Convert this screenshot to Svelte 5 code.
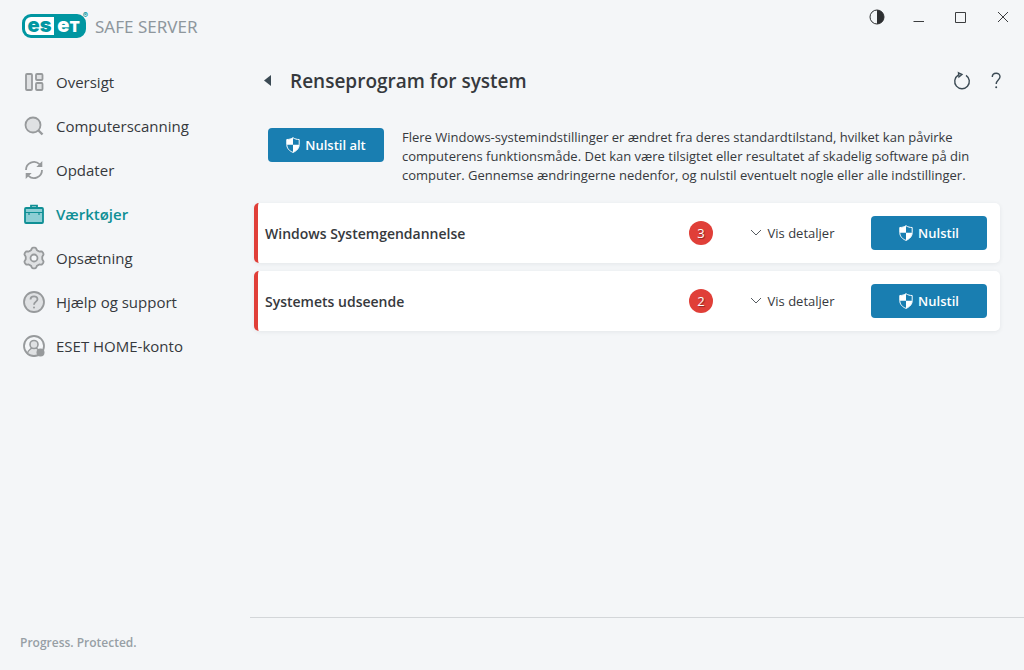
<script>
	const nav = [
		{ id: 'overview', label: 'Oversigt' },
		{ id: 'scan', label: 'Computerscanning' },
		{ id: 'update', label: 'Opdater' },
		{ id: 'tools', label: 'Værktøjer' },
		{ id: 'setup', label: 'Opsætning' },
		{ id: 'help', label: 'Hjælp og support' },
		{ id: 'account', label: 'ESET HOME-konto' },
	];

	const items = [
		{ name: 'Windows Systemgendannelse', count: 3 },
		{ name: 'Systemets udseende', count: 2 },
	];

	// six rounded teeth, the first one pointing up
	const gear = Array.from({ length: 72 }, (_, i) => {
		const a = (i * Math.PI) / 36;
		const r = 9.3 + 1.1 * Math.tanh(2 * Math.cos(6 * a));
		return `${(12 + r * Math.sin(a)).toFixed(2)},${(12 - r * Math.cos(a)).toFixed(2)}`;
	}).join(' ');

	let active = $state('tools');
</script>

{#snippet shield()}
	<svg width="14" height="16" viewBox="0 0 14 16" aria-hidden="true">
		<path d="M7 .7C5.200 2 3 2.500 .8 2.500V7.500C.8 11.400 3.300 13.900 7 15.400C10.700 13.900 13.200 11.400 13.200 7.500V2.500C11 2.500 8.800 2 7 .7Z" fill="none" stroke="#fff" />
		<path d="M7 .7C5.200 2 3 2.500 .8 2.500V7.800H7ZM7 7.800H13.200C13 11.500 10.700 13.900 7 15.400Z" fill="#fff" />
	</svg>
{/snippet}

<div class="app">
	<aside class="sidebar">
		<div class="brand">
			<div class="logo"><span class="logo__left">es</span><span class="logo__right">e<small>T</small></span><sup>®</sup></div>
			<span class="brand__name">SAFE SERVER</span>
		</div>

		<nav>
			{#each nav as item}
				<a href="#{item.id}" class:active={active === item.id} onclick={() => (active = item.id)}>
					<svg width="24" height="24" viewBox="0 0 24 24" aria-hidden="true">
						{#if item.id === 'overview'}
							<rect x="4" y="4" width="6" height="16" rx="1" />
							<rect x="14" y="4" width="6.500" height="6" rx="1" />
							<rect x="14" y="13" width="6.500" height="7" rx="1" />
						{:else if item.id === 'scan'}
							<circle cx="11" cy="11" r="7.500" />
							<path d="M16.500 16.500L20.500 20.500" stroke-width="2.400" />
						{:else if item.id === 'update'}
							<path class="line" d="M4 12A8 8 0 0 1 17.500 6.200M20 12A8 8 0 0 1 6.500 17.800" />
							<path class="solid" d="M20.300 3V9H14.300ZM3.700 21V15H9.700Z" />
						{:else if item.id === 'tools'}
							<path class="line" d="M9 6V3.700H15V6" />
							<rect x="3" y="6" width="18" height="15" rx="1" />
							<path d="M3 10.500H21M7 10.500V13M17 10.500V13" stroke-width="1.200" />
						{:else if item.id === 'setup'}
							<polygon points={gear} />
							<circle cx="12" cy="12" r="3.500" class="hole" />
						{:else if item.id === 'help'}
							<circle cx="12" cy="12" r="10" />
							<path class="line" d="M8.500 9.500C8.500 5.300 15.500 5.300 15.500 9.300C15.500 11.800 12 11.500 12 14.800" />
							<circle class="dot" cx="12" cy="17.500" r="1" />
						{:else}
							<circle cx="12" cy="12" r="10" class="hole" />
							<path d="M5.500 19.500C5.500 16.500 8.500 15.500 9.700 14H14.300C15.500 15.500 18.500 16.500 18.500 19.500Q12 24 5.500 19.500Z" stroke-width="1.400" />
							<circle cx="12" cy="10.500" r="4" stroke-width="1.600" />
							<circle class="dot" cx="18.500" cy="18.500" r="4" />
						{/if}
					</svg>
					{item.label}
				</a>
			{/each}
		</nav>

		<p class="slogan">Progress. Protected.</p>
	</aside>

	<main>
		<div class="window">
			<button aria-label="Skift tema">
				<svg width="16" height="16" viewBox="0 0 16 16">
					<circle cx="8" cy="8" r="7" fill="none" stroke="#2d2f31" />
					<path d="M8 1A7 7 0 0 1 8 15Z" />
				</svg>
			</button>
			<button aria-label="Minimer">
				<svg width="16" height="16" viewBox="0 0 16 16"><path d="M2.500 12.500H13" /></svg>
			</button>
			<button aria-label="Maksimer">
				<svg width="16" height="16" viewBox="0 0 16 16"><path d="M2.500 3.500H12.500V13.500H2.500Z" /></svg>
			</button>
			<button aria-label="Luk">
				<svg width="16" height="16" viewBox="0 0 16 16"><path d="M3 3L13 13M13 3L3 13" /></svg>
			</button>
		</div>

		<header>
			<button class="back" aria-label="Tilbage">
				<svg width="8" height="12" viewBox="0 0 8 12"><path d="M7 0V11L0 5.500Z" fill="#3b4a54" /></svg>
			</button>
			<h1>Renseprogram for system</h1>
			<button class="tool" aria-label="Opdater">
				<svg width="20" height="20" viewBox="0 0 20 20">
					<path d="M6.200 4.200A7.300 7.300 0 1 0 14 4.300" />
					<path d="M6.500 1.800L10 3.500L7 6Z" />
				</svg>
			</button>
			<button class="tool" aria-label="Hjælp">
				<svg width="20" height="20" viewBox="0 0 20 20">
					<path d="M6.300 6C6.300 1 14 1 14 5.700C14 9 10.200 9 10.200 13" />
					<circle cx="10.200" cy="16.300" r="1" fill="#3b4a54" />
				</svg>
			</button>
		</header>

		<section class="intro">
			<button class="primary">{@render shield()}Nulstil alt</button>
			<p>
				Flere Windows-systemindstillinger er ændret fra deres standardtilstand, hvilket kan påvirke
				computerens funktionsmåde. Det kan være tilsigtet eller resultatet af skadelig software på din
				computer. Gennemse ændringerne nedenfor, og nulstil eventuelt nogle eller alle indstillinger.
			</p>
		</section>

		<ul>
			{#each items as item}
				<li>
					<h2>{item.name}</h2>
					<span class="count">{item.count}</span>
					<button class="details">
						<svg width="12" height="8" viewBox="0 0 12 8" aria-hidden="true"><path d="M1 1L6 6L11 1" fill="none" stroke="#555b60" /></svg>
						Vis detaljer
					</button>
					<button class="primary">{@render shield()}Nulstil</button>
				</li>
			{/each}
		</ul>

		<footer></footer>
	</main>
</div>

<style>
	:global(body) {
		margin: 0;
		background: #f4f6f8;
		color: #36393d;
		font-family: 'Open Sans', 'Noto Sans', sans-serif;
		font-size: 13px;
	}

	.app {
		display: grid;
		grid-template-columns: 250px 1fr;
		min-height: 100vh;
	}

	h1,
	h2,
	p,
	ul {
		margin: 0;
		padding: 0;
	}

	button {
		display: flex;
		align-items: center;
		justify-content: center;
		padding: 0;
		border: 0;
		background: none;
		color: inherit;
		font: inherit;
		cursor: pointer;
	}

	.sidebar {
		display: flex;
		flex-direction: column;
	}

	.brand {
		display: flex;
		align-items: center;
		gap: 9px;
		height: 52px;
		padding: 0 0 8px 22px;
	}

	.logo {
		position: relative;
		display: flex;
		box-sizing: border-box;
		width: 64px;
		height: 24px;
		border: 3px solid #0096a1;
		border-radius: 9px;
		background: #0096a1;
		color: #fff;
		font-family: Inter, sans-serif;
		font-size: 20px;
		font-weight: 900;
		line-height: 16px;
	}

	.logo span {
		flex: 1;
		text-align: center;
	}

	.logo small {
		font-size: 15px;
	}

	.logo__left {
		border-radius: 6px 0 0 6px;
		background: #fff;
		color: #0096a1;
	}

	.logo sup {
		position: absolute;
		top: -8px;
		right: -5px;
		color: #0096a1;
		font-size: 8px;
		line-height: 12px;
	}

	.brand__name {
		color: #8e979d;
		font-family: 'Noto Sans', sans-serif;
		font-size: 17px;
	}

	nav a {
		display: flex;
		align-items: center;
		gap: 10px;
		height: 44px;
		padding-left: 22px;
		color: #36393d;
		font-size: 15px;
		text-decoration: none;
	}

	nav .active {
		color: #0f8f95;
		font-weight: 600;
	}

	nav svg {
		fill: #dfe1e3;
		stroke: #979a9c;
		stroke-width: 1.8;
	}

	nav .active svg {
		fill: #8dced4;
		stroke: #0f8f95;
	}

	nav .line {
		fill: none;
	}

	nav .hole {
		fill: #f4f6f8;
	}

	nav .solid,
	nav .dot {
		fill: #979a9c;
		stroke: none;
	}

	.slogan {
		margin-top: auto;
		padding: 0 0 18px 20px;
		color: #979fa5;
		font-size: 12px;
		font-weight: 600;
		line-height: 18px;
	}

	main {
		display: flex;
		flex-direction: column;
	}

	.window {
		display: flex;
		justify-content: flex-end;
		height: 34px;
	}

	.window button {
		width: 42px;
	}

	.window path {
		fill: none;
		stroke: #3b3d3f;
	}

	.window button:first-child path {
		fill: #2d2f31;
		stroke: none;
	}

	header {
		display: flex;
		align-items: center;
		height: 42px;
		padding: 26px 18px 0 8px;
	}

	.back {
		width: 20px;
		height: 20px;
	}

	h1 {
		flex: 1;
		padding-left: 12px;
		font-size: 19px;
		font-weight: 600;
		line-height: 28px;
	}

	.tool {
		width: 20px;
		height: 20px;
		margin-left: 14px;
	}

	.tool path {
		fill: none;
		stroke: #3b4a54;
		stroke-width: 1.4;
	}

	.intro {
		display: flex;
		gap: 18px;
		align-items: flex-start;
		padding: 26px 24px 18px 18px;
	}

	.intro p {
		flex: 1;
		line-height: 19px;
	}

	.primary {
		flex: none;
		gap: 5px;
		width: 116px;
		height: 34px;
		border-radius: 4px;
		background: #197eb1;
		color: #fff;
		font-weight: 600;
	}

	ul {
		display: grid;
		gap: 8px;
		padding: 0 24px 0 4px;
		list-style: none;
	}

	li {
		display: flex;
		align-items: center;
		box-sizing: border-box;
		height: 60px;
		padding: 0 13px 0 7px;
		border-left: 4px solid #e03f38;
		border-radius: 5px;
		background: #fff;
		box-shadow: 0 1px 4px rgba(40, 50, 70, 0.08);
	}

	h2 {
		flex: 1;
		font-size: 14px;
		font-weight: 600;
	}

	.count {
		width: 24px;
		border-radius: 12px;
		background: #e03f38;
		color: #fff;
		line-height: 24px;
		text-align: center;
		text-shadow: 1px 1px 1px rgba(0, 0, 0, 0.4);
	}

	.details {
		gap: 6px;
		width: 86px;
		margin: 0 36px;
		white-space: nowrap;
	}

	footer {
		height: 52px;
		margin-top: auto;
		border-top: 1px solid #d3d6d9;
	}
</style>
